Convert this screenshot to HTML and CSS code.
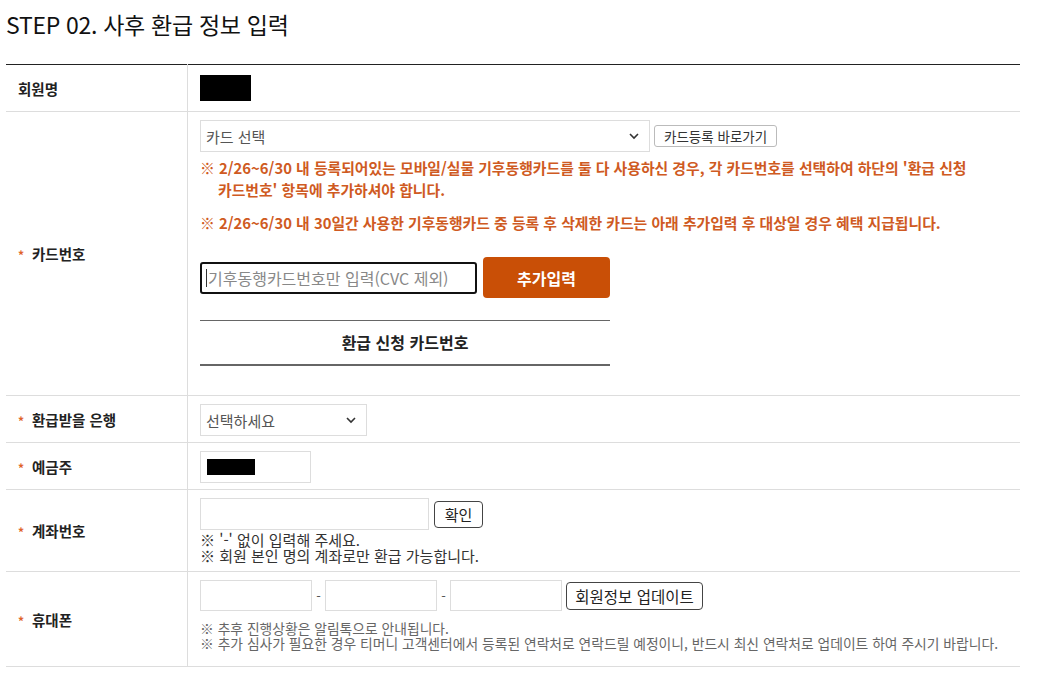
FILE: index.html
```html
<!DOCTYPE html>
<html lang="ko">
<head>
    <meta charset="UTF-8">
    <title>사후 환급 정보 입력</title>
    <link rel="stylesheet" href="styles.css">
</head>
<body>
    <h2 class="title">STEP 02. 사후 환급 정보 입력</h2>

    <table class="form-table">
        <tr class="row-name">
            <th>회원명</th>
            <td><span class="masked"></span></td>
        </tr>
        <tr class="row-card">
            <th><span class="req">*</span>카드번호</th>
            <td>
                <div class="line">
                    <div class="select-box card-select">
                        <span>카드 선택</span>
                        <svg width="12" height="8" viewBox="0 0 12 8"><path d="M2 2l4 4 4-4" fill="none" stroke="#333" stroke-width="1.6"/></svg>
                    </div>
                    <button class="btn-small">카드등록 바로가기</button>
                </div>
                <p class="warn">※ 2/26~6/30 내 등록되어있는 모바일/실물 기후동행카드를 둘 다 사용하신 경우, 각 카드번호를 선택하여 하단의 '환급 신청<br>카드번호' 항목에 추가하셔야 합니다.</p>
                <p class="warn warn-2">※ 2/26~6/30 내 30일간 사용한 기후동행카드 중 등록 후 삭제한 카드는 아래 추가입력 후 대상일 경우 혜택 지급됩니다.</p>
                <div class="line add-line">
                    <div class="card-input"><span class="caret"></span>기후동행카드번호만 입력(CVC 제외)</div>
                    <button class="btn-add">추가입력</button>
                </div>
                <div class="card-list">환급 신청 카드번호</div>
            </td>
        </tr>
        <tr class="row-bank">
            <th><span class="req">*</span>환급받을 은행</th>
            <td>
                <div class="select-box bank-select">
                    <span>선택하세요</span>
                    <svg width="12" height="8" viewBox="0 0 12 8"><path d="M2 2l4 4 4-4" fill="none" stroke="#333" stroke-width="1.6"/></svg>
                </div>
            </td>
        </tr>
        <tr class="row-holder">
            <th><span class="req">*</span>예금주</th>
            <td>
                <div class="text-box holder-box"><span class="masked small"></span></div>
            </td>
        </tr>
        <tr class="row-account">
            <th><span class="req">*</span>계좌번호</th>
            <td>
                <div class="line">
                    <div class="text-box account-box"></div>
                    <button class="btn-line btn-confirm">확인</button>
                </div>
                <p class="note">※ '-' 없이 입력해 주세요.<br>※ 회원 본인 명의 계좌로만 환급 가능합니다.</p>
            </td>
        </tr>
        <tr class="row-phone">
            <th><span class="req">*</span>휴대폰</th>
            <td>
                <div class="line">
                    <div class="text-box phone-box"></div>
                    <span class="dash">-</span>
                    <div class="text-box phone-box"></div>
                    <span class="dash">-</span>
                    <div class="text-box phone-box"></div>
                    <button class="btn-line btn-update">회원정보 업데이트</button>
                </div>
                <p class="note note-light">※ 추후 진행상황은 알림톡으로 안내됩니다.<br>※ 추가 심사가 필요한 경우 티머니 고객센터에서 등록된 연락처로 연락드릴 예정이니, 반드시 최신 연락처로 업데이트 하여 주시기 바랍니다.</p>
            </td>
        </tr>
    </table>
</body>
</html>
```

FILE: styles.css
```css
body {
    margin: 0;
    padding: 0 6px;
    font-family: "Noto Sans CJK KR", "Noto Sans", sans-serif;
    color: #222;
    background: #fff;
}
.title {
    margin: 0;
    height: 64px;
    padding-top: 7px;
    box-sizing: border-box;
    font-size: 23px;
    font-weight: 400;
    line-height: 34px;
    color: #111;
    letter-spacing: -0.3px;
}
.form-table {
    width: 1014px;
    border-collapse: collapse;
    border-top: 1px solid #222;
    border-bottom: 1px solid #222;
}
.form-table th {
    width: 169px;
    padding: 0 0 0 12px;
    text-align: left;
    font-size: 14.5px;
    font-weight: 700;
    color: #222;
    border-bottom: 1px solid #ddd;
    border-right: 1px solid #ddd;
    vertical-align: middle;
}
.form-table td {
    padding: 8px 12px 6px;
    border-bottom: 1px solid #ddd;
    vertical-align: top;
    font-size: 14px;
}
.req {
    display: inline-block;
    width: 14px;
    color: #e0622a;
    font-size: 12px;
    box-sizing: border-box;
}
.row-name td {
    padding: 10px 12px;
}
.masked {
    display: block;
    width: 51px;
    height: 26px;
    background: #000;
}
.masked.small {
    width: 48px;
    height: 16px;
}
.line {
    display: flex;
    align-items: center;
}
.select-box {
    display: flex;
    align-items: center;
    justify-content: space-between;
    height: 32px;
    box-sizing: border-box;
    padding: 0 9px 0 5px;
    border: 1px solid #ddd;
    color: #555;
    font-size: 15px;
}
.card-select {
    width: 450px;
}
.bank-select {
    width: 167px;
}
.btn-small {
    margin-left: 4px;
    height: 22px;
    padding: 0 9px;
    font-family: inherit;
    font-size: 13.5px;
    color: #333;
    background: #fff;
    border: 1px solid #bbb;
    border-radius: 3px;
    line-height: 20px;
}
.warn {
    margin: 5px 0 0;
    padding-left: 18px;
    text-indent: -18px;
    font-size: 14.85px;
    font-weight: 700;
    line-height: 22px;
    color: #cf5a22;
}
.warn-2 {
    margin-top: 11px;
}
.add-line {
    margin-top: 23px;
}
.card-input {
    display: flex;
    align-items: center;
    width: 277px;
    height: 32px;
    box-sizing: border-box;
    padding-left: 4px;
    border: 2px solid #111;
    border-radius: 3px;
    color: #888;
    font-size: 16px;
}
.caret {
    width: 1px;
    height: 18px;
    background: #333;
    margin-right: 1px;
}
.btn-add {
    margin-left: 6px;
    width: 127px;
    height: 41px;
    border: 0;
    border-radius: 4px;
    background: #c94f06;
    color: #fff;
    font-family: inherit;
    font-size: 16px;
    font-weight: 700;
}
.card-list {
    width: 410px;
    height: 46px;
    box-sizing: border-box;
    margin-top: 22px;
    margin-bottom: 23px;
    border-top: 1px solid #666;
    border-bottom: 2px solid #666;
    text-align: center;
    line-height: 42px;
    font-size: 16px;
    font-weight: 700;
    color: #222;
}
.row-holder td {
    padding-bottom: 6px;
}
.text-box {
    height: 32px;
    box-sizing: border-box;
    border: 1px solid #ddd;
    background: #fff;
}
.holder-box {
    width: 111px;
    padding: 7px 0 0 6px;
}
.account-box {
    width: 229px;
}
.phone-box {
    width: 112px;
    height: 31px;
}
.dash {
    width: 13px;
    text-align: center;
    color: #555;
    font-size: 13px;
}
.btn-line {
    font-family: inherit;
    color: #222;
    background: #fff;
    border: 1px solid #444;
    border-radius: 4px;
    padding: 0;
}
.btn-confirm {
    margin-left: 5px;
    width: 49px;
    height: 27px;
    font-size: 15px;
}
.btn-update {
    margin-left: 4px;
    width: 137px;
    height: 28px;
    font-size: 15.5px;
}
.note {
    margin: 2px 0 0;
    font-size: 15px;
    line-height: 16px;
    color: #333;
}
.row-account td {
    padding-bottom: 7px;
}
.row-phone td {
    padding-bottom: 15px;
}
.note-light {
    margin-top: 10px;
    font-size: 13.8px;
    line-height: 15px;
    color: #666;
}
```
